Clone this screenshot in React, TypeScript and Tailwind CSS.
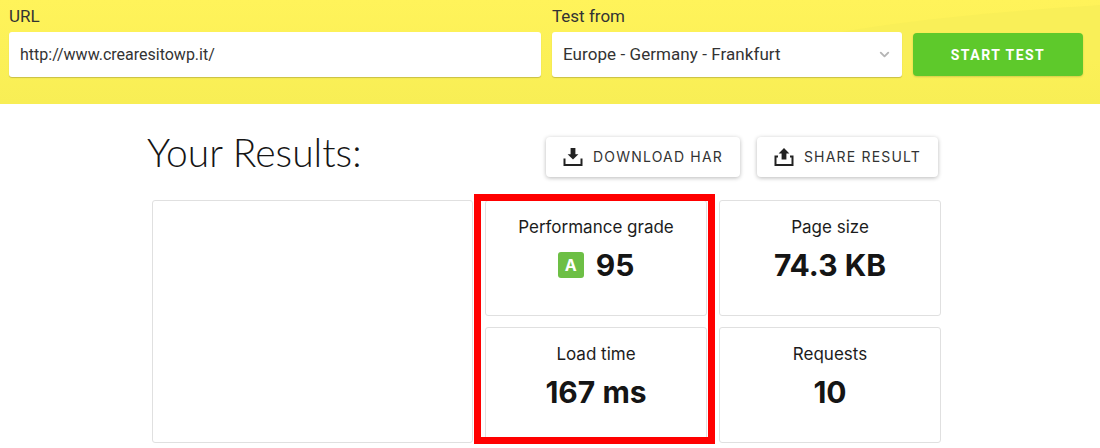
import React from "react";
import { ChevronDown } from "lucide-react";

const DownloadIcon = () => (
  <svg width="20" height="20" viewBox="0 0 20 20" className="text-[#222]" fill="currentColor">
    <path d="M7.6 1h4.8v6.2h3L10 12.6 4.6 7.2h3z" />
    <path d="M0.5 11.5h2V17h15v-5.500h2V19h-19z" />
  </svg>
);

const UploadIcon = () => (
  <svg width="20" height="20" viewBox="0 0 20 20" className="text-[#222]" fill="currentColor">
    <path d="M10 1l5.400 5.400h-3v6.200H7.600V6.400h-3z" />
    <path d="M0.500 8.500h3.500v2H2.500V17h15v-6.500H16v-2h3.500V19h-19z" />
  </svg>
);

const ActionButton: React.FC<{ icon: React.ReactNode; label: string; className: string }> = ({ icon, label, className }) => (
  <button className={`h-10 flex items-center justify-center gap-[10px] rounded bg-white text-sm font-normal tracking-[0.085em] text-[#333] shadow-[0_1px_4px_rgba(0,0,0,0.28)] ${className}`}>
    {icon}
    {label}
  </button>
);

const StatCard: React.FC<{ label: string; children: React.ReactNode }> = ({ label, children }) => (
  <div className="h-[116px] rounded-[3px] border border-[#e0e0e0] bg-white pt-[16px] text-center">
    <p className="text-[17px] leading-5 text-[#1c1c1c]">{label}</p>
    <div className="mt-[8px] flex items-center justify-center gap-[12px] text-[30px] font-bold leading-10 text-[#151515]">
      {children}
    </div>
  </div>
);

export default function App() {
  return (
    <div className="relative h-[448px] w-[1100px] overflow-hidden bg-white font-['Inter',sans-serif]">
      <header className="relative flex h-[104px] gap-[11px] bg-gradient-to-b from-[#fff35a] to-[#f8ee55] pl-[9px] pt-[5px] font-['Roboto',sans-serif]">
        <svg className="absolute right-0 top-0 h-[60px] w-[300px]" viewBox="0 0 300 60" preserveAspectRatio="none">
          <path d="M0 40C80 22 190 12 300 5V60H0z" fill="#f9ef58" />
        </svg>
        <div className="relative w-[532px]">
          <label className="block text-[17px] leading-[22px] text-[#333]">URL</label>
          <div className="mt-[5px] flex h-[45px] items-center rounded-[3px] bg-white pl-[11px] text-base text-[#333] shadow-[0_1px_1px_rgba(0,0,0,0.2)]">
            http://www.crearesitowp.it/
          </div>
        </div>
        <div className="relative w-[350px]">
          <label className="block text-[17px] leading-[22px] text-[#333]">Test from</label>
          <div className="mt-[5px] flex h-[45px] items-center justify-between rounded-[3px] bg-white pl-[11px] pr-[10px] text-[17px] tracking-[0.004em] text-[#333] shadow-[0_1px_1px_rgba(0,0,0,0.2)]">
            Europe - Germany - Frankfurt
            <ChevronDown size={15} strokeWidth={3} className="text-[#b5b5b5]" />
          </div>
        </div>
        <button className="relative mt-[28px] h-[43px] w-[170px] rounded bg-[#5ec92b] text-sm font-bold tracking-[0.105em] text-white shadow-[0_1px_2px_rgba(0,0,0,0.15)]">
          START TEST
        </button>
      </header>

      <main className="pl-[147px] pt-[22px]">
        <div className="flex h-[52px] w-[791px] items-center justify-between">
          <h1 className="font-['Lato',sans-serif] text-[39px] font-light leading-[52px] text-[#151515]">Your Results:</h1>
          <div className="mt-[10px] flex gap-[17px]">
            <ActionButton icon={<DownloadIcon />} label="DOWNLOAD HAR" className="w-[194px]" />
            <ActionButton icon={<UploadIcon />} label="SHARE RESULT" className="w-[181px]" />
          </div>
        </div>
        <div className="ml-[5px] mt-[22px] grid w-[789px] grid-cols-[321px_222px_222px] grid-rows-[116px_116px] gap-x-[12px] gap-y-[11px]">
          <div className="row-span-2 rounded-[3px] border border-[#e0e0e0] bg-white" />
          <StatCard label="Performance grade">
            <span className="flex h-[26px] w-[26px] items-center justify-center rounded-[3px] bg-[#6dbf45] text-base font-bold text-white">A</span>
            <span>95</span>
          </StatCard>
          <StatCard label="Page size">74.3 KB</StatCard>
          <StatCard label="Load time">167 ms</StatCard>
          <StatCard label="Requests">10</StatCard>
        </div>
      </main>

      <div className="absolute left-[474px] top-[194px] h-[250px] w-[241px] border-[7px] border-[#ff0000]" />
    </div>
  );
}
